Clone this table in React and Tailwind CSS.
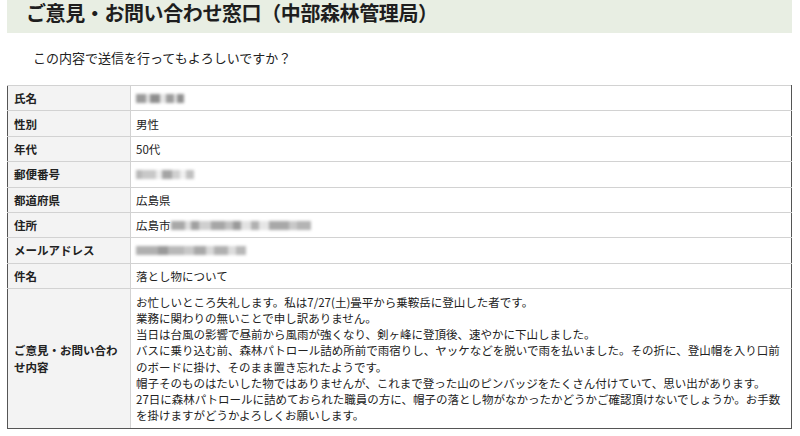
const FONT = { fontFamily: '"Noto Sans CJK JP", "Noto Sans", sans-serif' };

function Blur({ w, shades }) {
  return (
    <span className="inline-flex items-center h-[16px] align-top blur-[1.6px]" style={{ width: w }}>
      {shades.map((s, i) => (
        <span key={i} className="inline-block h-[9px]" style={{ width: s[0], background: s[1] }} />
      ))}
    </span>
  );
}

const rows = [
  ['氏名', <Blur w={48} shades={[[10, '#9a9a9a'], [4, '#e0e0e0'], [10, '#8e8e8e'], [6, '#e6e6e6'], [8, '#9c9c9c'], [3, '#e6e6e6'], [7, '#909090']]} />],
  ['性別', '男性'],
  ['年代', '50代'],
  ['郵便番号', <Blur w={58} shades={[[6, '#b8b8b8'], [14, '#c8c8c8'], [6, '#eeeeee'], [10, '#a4a4a4'], [8, '#d0d0d0'], [6, '#f0f0f0'], [8, '#c0c0c0']]} />],
  ['都道府県', '広島県'],
  ['住所', <span>広島市<Blur w={140} shades={[[14, '#a8a8a8'], [6, '#dddddd'], [8, '#a0a0a0'], [12, '#cfcfcf'], [14, '#a6a6a6'], [8, '#c0c0c0'], [8, '#9a9a9a'], [10, '#e2e2e2'], [8, '#b0b0b0'], [10, '#e6e6e6'], [20, '#a8a8a8'], [8, '#c8c8c8'], [14, '#b4b4b4']]} /></span>],
  ['メールアドレス', <Blur w={110} shades={[[22, '#b0b0b0'], [10, '#9a9a9a'], [16, '#b8b8b8'], [10, '#c8c8c8'], [12, '#a8a8a8'], [8, '#d8d8d8'], [14, '#b0b0b0'], [8, '#dcdcdc'], [10, '#b8b8b8']]} />],
  ['件名', '落とし物について'],
];

const lines = [
  'お忙しいところ失礼します。私は7/27(土)畳平から乗鞍岳に登山した者です。',
  '業務に関わりの無いことで申し訳ありません。',
  '当日は台風の影響で昼前から風雨が強くなり、剣ヶ峰に登頂後、速やかに下山しました。',
  'バスに乗り込む前、森林パトロール詰め所前で雨宿りし、ヤッケなどを脱いで雨を払いました。その折に、登山帽を入り口前',
  'のボードに掛け、そのまま置き忘れたようです。',
  '帽子そのものはたいした物ではありませんが、これまで登った山のピンバッジをたくさん付けていて、思い出があります。',
  '27日に森林パトロールに詰めておられた職員の方に、帽子の落とし物がなかったかどうかご確認頂けないでしょうか。お手数',
  'を掛けますがどうかよろしくお願いします。',
];

export default function App() {
  return (
    <div className="w-[800px] h-[436px] bg-white overflow-hidden text-[#222]" style={FONT}>
      <div className="pl-[7px] pr-[8px]">
        <div className="h-[33px] bg-[#e8eee3] pl-[19px] flex items-start">
          <h1 className="text-[20px] font-bold leading-[26px] text-[#1e1e1e] tracking-[-0.4px]">
            ご意見・お問い合わせ窓口（中部森林管理局）
          </h1>
        </div>
        <div className="h-[52px] pt-[16px] pl-[26px]">
          <p className="text-[13px] leading-[18px] text-[#222]">この内容で送信を行ってもよろしいですか？</p>
        </div>
        <table className="w-full border-collapse border border-[#555] text-[11.5px]">
          <tbody>
            {rows.map(([k, v]) => (
              <tr key={k}>
                <th className="w-[123px] bg-[#f3f3f3] border border-[#d2d2d2] border-l-[#555] text-left font-bold pl-[6px] pr-[4px] py-[4.2px] leading-[16px] align-middle">
                  {k}
                </th>
                <td className="border border-[#d2d2d2] border-r-[#555] pl-[5px] pr-[4px] py-[4.2px] leading-[16px] whitespace-nowrap">
                  {v}
                </td>
              </tr>
            ))}
            <tr>
              <th className="w-[123px] bg-[#f3f3f3] border border-[#d2d2d2] border-l-[#555] border-b-[#555] text-left font-bold pl-[6px] pr-[4px] leading-[16.5px] align-middle">
                ご意見・お問い合わせ内容
              </th>
              <td className="border border-[#d2d2d2] border-r-[#555] border-b-[#555] pl-[5px] pr-[4px] py-[4.7px] leading-[16.2px] whitespace-nowrap">
                {lines.map((l, i) => (
                  <div key={i}>{l}</div>
                ))}
              </td>
            </tr>
          </tbody>
        </table>
      </div>
    </div>
  );
}
